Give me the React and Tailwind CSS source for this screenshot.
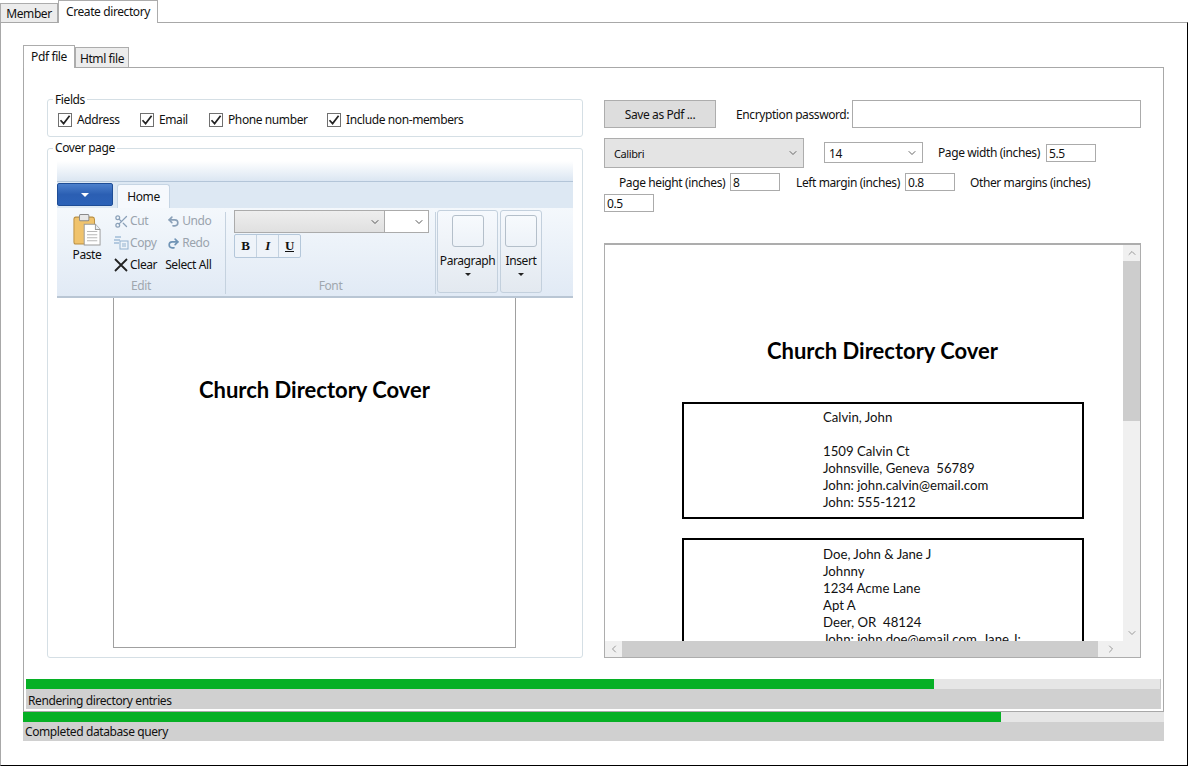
import { ChevronDown, ChevronLeft, ChevronRight, ChevronUp, Scissors, Undo2, Redo2 } from "lucide-react";

const uiFont = "font-['Noto_Sans',sans-serif] tracking-[-0.4px]";

const Check = ({ label, width }) => (
  <label className="flex items-center" style={{ width }}>
    <span className="flex h-[14px] w-[14px] items-center justify-center border border-[#707070] bg-white">
      <svg width="12" height="12" viewBox="0 0 12 12">
        <path d="M1.5 6.2 L4.6 9.6 L10.6 1.8" fill="none" stroke="#222" strokeWidth="1.7" />
      </svg>
    </span>
    <span className="ml-[5px] text-[12px] leading-4 text-[#111]">{label}</span>
  </label>
);

const Field = ({ value, className }) => (
  <div className={`h-[18px] w-[50px] border border-[#ababab] bg-white pl-[2px] text-[12px] leading-[18px] text-[#111] ${className || ""}`}>
    {value}
  </div>
);

const PasteIcon = () => (
  <svg width="28" height="33" viewBox="0 0 30 32" preserveAspectRatio="none">
    <rect x="1" y="4" width="22" height="26" rx="2" fill="#f0c36d" stroke="#b98d3e" />
    <rect x="7" y="1.5" width="10" height="6" rx="1" fill="#e8e8e8" stroke="#8a8a8a" />
    <path d="M12 11 H24 L29 16 V31 H12 Z" fill="#fff" stroke="#9a9a9a" />
    <path d="M24 11 V16 H29" fill="#e8eef5" stroke="#9a9a9a" />
    <path d="M15 18 H26 M15 21 H26 M15 24 H26 M15 27 H26" stroke="#b8b8b8" />
  </svg>
);

const CopyIcon = () => (
  <svg width="16" height="14" viewBox="0 0 16 14" className="opacity-80">
    <path d="M1 4 H7 M1 7 H6 M2 1 H8" stroke="#8fb0d0" strokeWidth="1.3" />
    <rect x="7" y="5" width="8" height="8" fill="#eef4fa" stroke="#7fa3c6" />
    <path d="M9 8 H13 M9 10 H13" stroke="#7fa3c6" />
  </svg>
);

const ClearIcon = () => (
  <svg width="14" height="14" viewBox="0 0 14 14">
    <path d="M1 1 L13 13 M13 1 L1 13" stroke="#222" strokeWidth="1.8" />
  </svg>
);

const SmallAction = ({ icon, label, disabled }) => (
  <div className={`flex h-[22px] items-center text-[12px] leading-4 ${disabled ? "text-[#9aa3ad]" : "text-[#111]"}`}>
    <span className="flex w-[16px] justify-center">{icon}</span>
    <span className="ml-[1px]">{label}</span>
  </div>
);

const BigDrop = ({ label, width }) => (
  <div className="flex h-[83px] flex-col items-center rounded-[3px] border border-[#c3d0dd] bg-gradient-to-b from-[#f6f9fd] to-[#e3e9f0]" style={{ width }}>
    <div className="mt-[4px] h-[32px] w-[32px] rounded-[3px] border border-[#b4bfca] bg-gradient-to-b from-[#f7fafd] to-[#edf2f8]" />
    <div className="mt-[6px] text-[12px] leading-4 text-[#111]">{label}</div>
    <div className="mt-[4px] h-0 w-0 border-x-[3px] border-t-[3px] border-x-transparent border-t-[#222]" />
  </div>
);

const Ribbon = () => (
  <div className="ml-[9px] flex h-[137px] w-[516px] flex-col border-b-2 border-[#b9c6d4]">
    <div className="h-[21px] border-b border-[#b3c5d8] bg-gradient-to-b from-white to-[#dbe6f2]" />
    <div className="flex h-[26px] items-end bg-[#dde8f3]">
      <div className="mb-[2px] flex h-[23px] w-[56px] items-center justify-center rounded-[2px] border border-[#1e4d96] bg-gradient-to-b from-[#4c80cc] via-[#2b5fb3] to-[#2c62b8]">
        <div className="h-0 w-0 border-x-[4px] border-t-[4px] border-x-transparent border-t-white" />
      </div>
      <div className="ml-[4px] flex h-[24px] w-[53px] items-center justify-center rounded-t-[3px] border border-b-0 border-[#c6d5e4] bg-[#f6f9fd] text-[12px] text-[#111]">
        Home
      </div>
    </div>
    <div className="flex min-h-0 flex-1 bg-gradient-to-b from-[#f4f8fc] to-[#e1eaf5] pt-[2px]">
      <div className="flex w-[168px] flex-col">
        <div className="flex flex-1">
          <div className="ml-[16px] flex w-[28px] flex-col items-center pt-[3px]">
            <PasteIcon />
            <div className="mt-[1px] text-[12px] leading-4 text-[#111]">Paste</div>
          </div>
          <div className="ml-[12px] flex flex-col">
            <SmallAction disabled label="Cut" icon={<Scissors size={15} color="#8aa0b8" />} />
            <SmallAction disabled label="Copy" icon={<CopyIcon />} />
            <SmallAction label="Clear" icon={<ClearIcon />} />
          </div>
          <div className="ml-[8px] flex flex-col">
            <SmallAction disabled label="Undo" icon={<Undo2 size={13} color="#8aa0b8" strokeWidth={3} />} />
            <SmallAction disabled label="Redo" icon={<Redo2 size={13} color="#6f93b5" strokeWidth={3} />} />
            <div className="flex h-[22px] items-center text-[12px] leading-4 text-[#111]">Select All</div>
          </div>
        </div>
        <div className="pb-[2px] text-center text-[12px] leading-4 text-[#a0a7ae]">Edit</div>
      </div>
      <div className="my-[2px] w-px bg-[#c5d2df]" />
      <div className="flex w-[209px] flex-col">
        <div className="ml-[8px] flex h-[23px] w-[195px] border border-[#ababab]">
          <div className="flex w-[149px] items-center justify-end bg-gradient-to-b from-[#eeeeee] to-[#e0e0e0] pr-[3px]">
            <ChevronDown size={12} color="#555" />
          </div>
          <div className="flex flex-1 items-center justify-end border-l border-[#ababab] bg-white pr-[3px]">
            <ChevronDown size={12} color="#555" />
          </div>
        </div>
        <div className="ml-[8px] mt-[1px] flex h-[24px] w-[67px] rounded-[2px] border border-[#b4c7da] bg-[#eef3f9] text-[13px] text-[#111]">
          <span className="flex flex-1 items-center justify-center font-['Liberation_Serif',serif] font-bold">B</span>
          <span className="flex flex-1 items-center justify-center border-x border-[#c4d2e0] font-['Liberation_Serif',serif] font-bold italic">I</span>
          <span className="flex flex-1 items-center justify-center font-['Liberation_Serif',serif] font-bold underline">U</span>
        </div>
        <div className="mt-auto pb-[2px] text-center text-[12px] leading-4 text-[#a0a7ae]">Font</div>
      </div>
      <div className="my-[2px] w-px bg-[#c5d2df]" />
      <div className="ml-[1px] flex gap-[2px]">
        <BigDrop label="Paragraph" width={61} />
        <BigDrop label="Insert" width={42} />
      </div>
    </div>
  </div>
);

const DocBox = ({ lines, className }) => (
  <div className={`ml-[77px] w-[402px] border-2 border-black pl-[139px] font-['Lato',sans-serif] text-[13.2px] leading-[17px] tracking-normal text-[#111] ${className}`}>
    {lines.map((line, i) => (
      <div key={i} className="h-[17px] whitespace-pre">{line}</div>
    ))}
  </div>
);

export default function App() {
  return (
    <div className={`flex h-[766px] w-[1188px] flex-col overflow-hidden bg-white ${uiFont}`}>
      <div className="flex h-[22px] shrink-0 items-end text-[12px] text-[#111]">
        <div className="flex h-[19px] w-[58px] items-center justify-center border border-b-0 border-[#acacac] bg-[#ececec] pt-[2px]">Member</div>
        <div className="relative top-px flex h-[23px] w-[100px] items-center justify-center border border-b-0 border-[#acacac] bg-white">Create directory</div>
      </div>
      <div className="flex min-h-0 flex-1 flex-col border-y border-l border-r border-t-[#a8a8a8] border-l-[#a8a8a8] border-r-black border-b-black pl-[22px]">
        <div className="mt-[21px] flex h-[23px] shrink-0 items-end text-[12px] text-[#111]">
          <div className="relative top-px z-10 flex h-[23px] w-[52px] items-center justify-center border border-b-0 border-[#acacac] bg-white">Pdf file</div>
          <div className="flex h-[20px] w-[54px] items-center justify-center border border-b-0 border-[#acacac] bg-[#ececec] pt-[2px]">Html file</div>
        </div>
        <div className="flex h-[645px] w-[1141px] shrink-0 flex-col border border-[#a8a8a8]">
          <div className="flex h-[611px] shrink-0 pl-[23px] pt-[23px]">
            <div className="flex w-[536px] flex-col">
              <fieldset className="h-[46px] rounded-[3px] border border-[#d5dfe5] pl-[10px]">
                <legend className="ml-[-5px] px-[2px] pt-[1px] text-[12px] leading-4 text-[#111]">Fields</legend>
                <div className="flex pt-[4px]">
                  <Check label="Address" width={82} />
                  <Check label="Email" width={69} />
                  <Check label="Phone number" width={118} />
                  <Check label="Include non-members" />
                </div>
              </fieldset>
              <fieldset className="mt-[3px] h-[518px] rounded-[3px] border border-[#d5dfe5]">
                <legend className="ml-[5px] px-[2px] text-[12px] leading-4 text-[#111]">Cover page</legend>
                <div className="pt-[5px]">
                  <Ribbon />
                  <div className="ml-[65px] h-[350px] w-[403px] border border-t-0 border-[#a0a0a0] bg-white pt-[77px] text-center font-['Lato',sans-serif] text-[22px] font-bold leading-[30px] tracking-normal text-black">
                    Church Directory Cover
                  </div>
                </div>
              </fieldset>
            </div>
            <div className="ml-[21px] flex w-[537px] flex-col pt-[9px] text-[12px] leading-4 text-[#111]">
              <div className="flex h-[28px] items-center">
                <div className="flex h-[28px] w-[112px] items-center justify-center border border-[#adadad] bg-[#dddddd] pt-[2px]">Save as Pdf ...</div>
                <div className="ml-[20px] w-[116px] whitespace-nowrap pt-[2px]">Encryption password:</div>
                <div className="h-[28px] w-[289px] border border-[#ababab] bg-white" />
              </div>
              <div className="mt-[10px] flex h-[30px] items-start">
                <div className="flex h-[30px] w-[200px] items-center justify-between border border-[#adadad] bg-[#e4e4e4] pl-[9px] pr-[4px]">
                  <span className="pt-[2px] text-[11px]">Calibri</span>
                  <ChevronDown size={12} color="#666" />
                </div>
                <div className="ml-[20px] mt-[4px] flex h-[21px] w-[99px] items-center justify-between border border-[#ababab] bg-white pl-[4px] pr-[4px]">
                  <span className="pt-[2px]">14</span>
                  <ChevronDown size={12} color="#666" />
                </div>
                <div className="ml-[15px] mt-[7px] w-[108px] whitespace-nowrap">Page width (inches)</div>
                <Field value="5.5" className="mt-[6px]" />
              </div>
              <div className="mt-[5px] flex h-[18px] items-center">
                <div className="ml-[15px] w-[111px] whitespace-nowrap pt-[2px]">Page height (inches)</div>
                <Field value="8" />
                <div className="ml-[16px] w-[109px] whitespace-nowrap pt-[2px]">Left margin (inches)</div>
                <Field value="0.8" />
                <div className="ml-[15px] whitespace-nowrap pt-[2px]">Other margins (inches)</div>
              </div>
              <Field value="0.5" className="mt-[3px]" />
              <div className="mt-[31px] flex h-[415px] w-[537px] flex-col border border-t-2 border-[#adadad]">
                <div className="flex min-h-0 flex-1">
                  <div className="min-w-0 flex-1 overflow-hidden bg-white">
                    <div className="mt-[91px] pl-[37px] text-center font-['Lato',sans-serif] text-[22px] font-bold leading-[30px] tracking-normal text-black">
                      Church Directory Cover
                    </div>
                    <DocBox className="mt-[36px] h-[117px] pt-[5px]" lines={["Calvin, John", "", "1509 Calvin Ct", "Johnsville, Geneva  56789", "John: john.calvin@email.com", "John: 555-1212"]} />
                    <DocBox className="mt-[19px] pt-[6px]" lines={["Doe, John & Jane J", "Johnny", "1234 Acme Lane", "Apt A", "Deer, OR  48124", "John: john.doe@email.com, Jane J:"]} />
                  </div>
                  <div className="flex w-[17px] shrink-0 flex-col bg-[#f0f0f0]">
                    <div className="flex h-[16px] items-center justify-center"><ChevronUp size={12} color="#999" /></div>
                    <div className="h-[160px] bg-[#cdcdcd]" />
                    <div className="mt-auto flex h-[17px] items-center justify-center"><ChevronDown size={12} color="#999" /></div>
                  </div>
                </div>
                <div className="flex h-[16px] shrink-0 bg-[#f0f0f0]">
                  <div className="flex w-[17px] items-center justify-center"><ChevronLeft size={12} color="#999" /></div>
                  <div className="w-[476px] bg-[#cdcdcd]" />
                  <div className="flex w-[25px] items-center justify-center"><ChevronRight size={12} color="#999" /></div>
                </div>
              </div>
            </div>
          </div>
          <div className="mx-[2px] shrink-0">
            <div className="h-[10px] border-r border-[#c4c4c4] bg-[#e6e6e6]">
              <div className="h-full w-[908px] bg-[#06b025]" />
            </div>
            <div className="flex h-[20px] items-center bg-[#d0d0d0] pl-[2px] pt-[3px] text-[12px] text-[#111]">Rendering directory entries</div>
          </div>
        </div>
        <div className="w-[1141px] shrink-0">
          <div className="h-[10px] bg-[#e6e6e6]">
            <div className="h-full w-[978px] bg-[#06b025]" />
          </div>
          <div className="flex h-[19px] items-center bg-[#d0d0d0] pl-[2px] pt-px text-[12px] text-[#111]">Completed database query</div>
        </div>
      </div>
    </div>
  );
}
